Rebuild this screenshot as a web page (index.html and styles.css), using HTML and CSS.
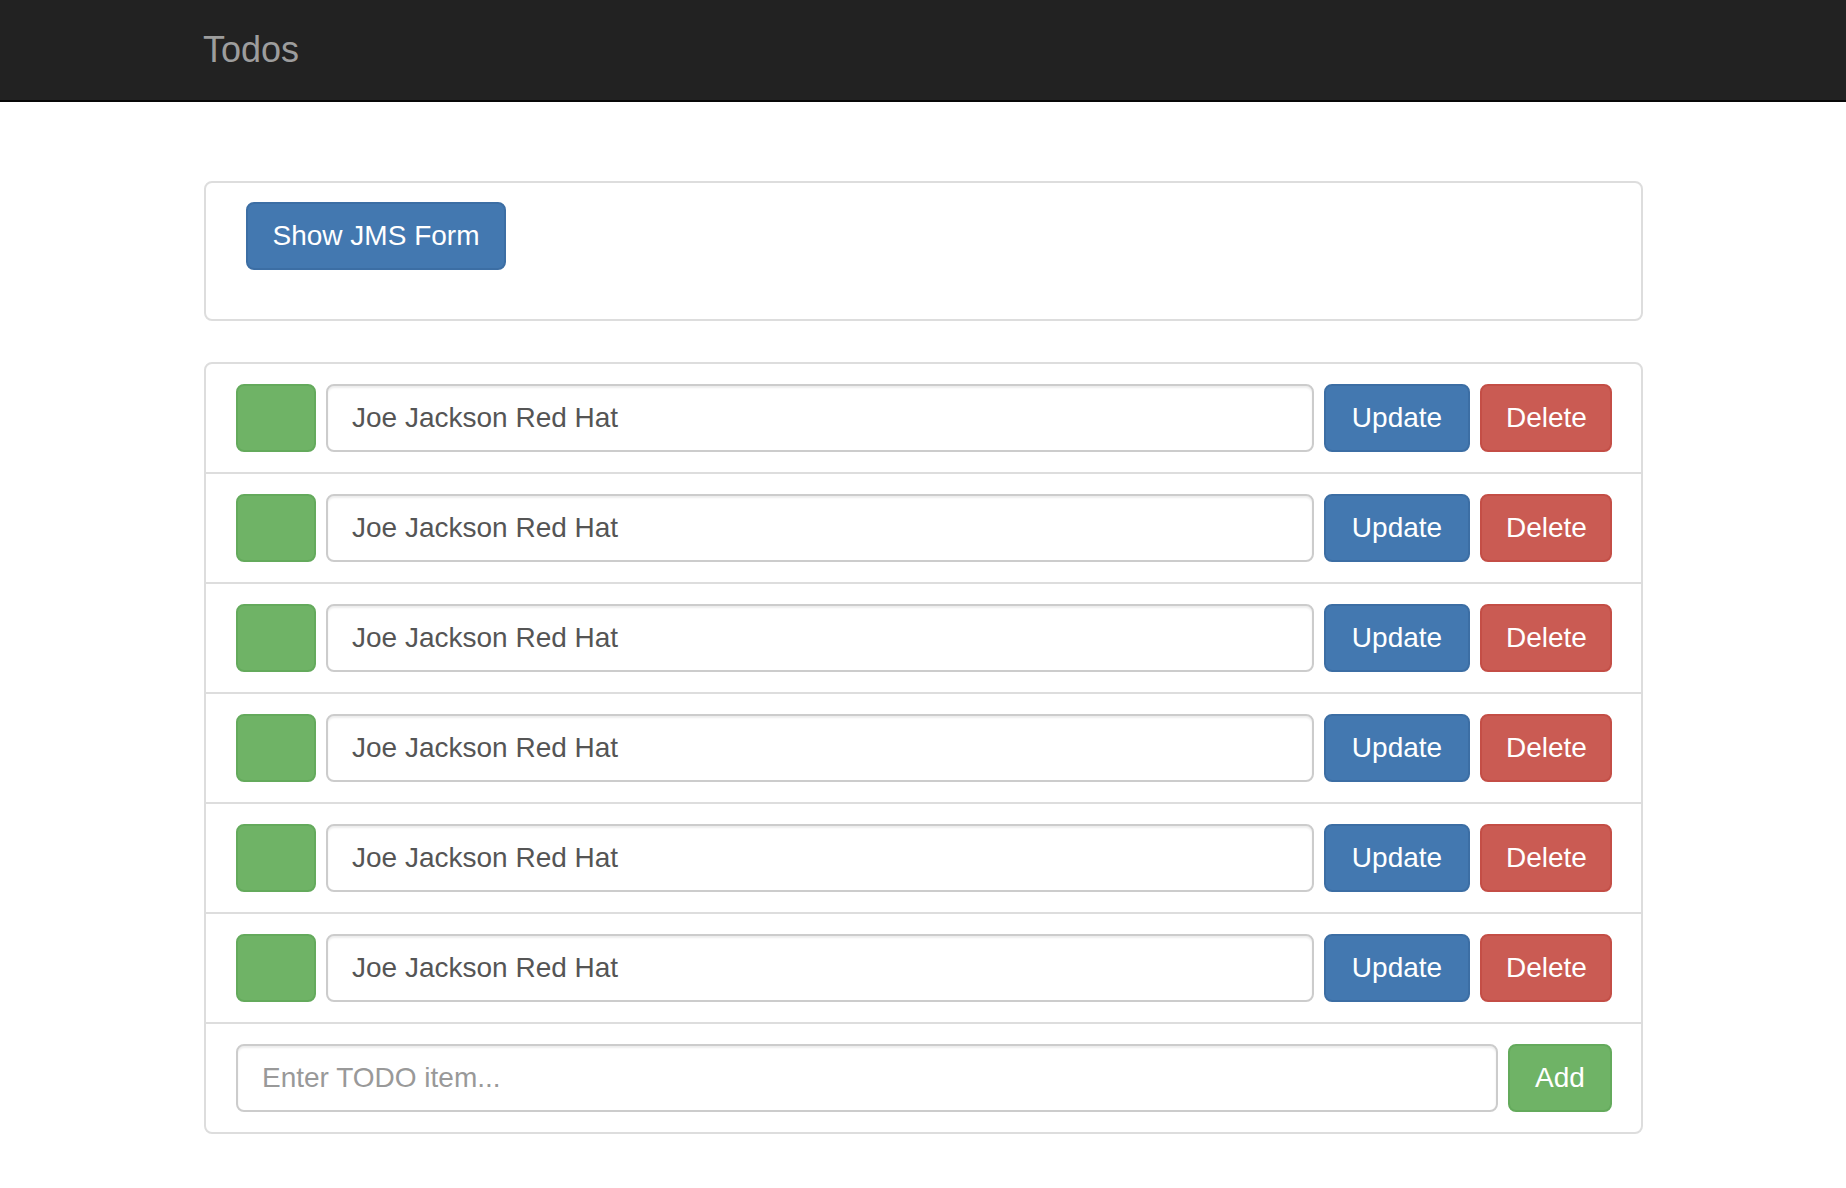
FILE: index.html
```html
<!DOCTYPE html>
<html lang="en">
<head>
<meta charset="utf-8">
<title>Todos</title>
<link rel="stylesheet" href="styles.css">
</head>
<body>
<nav class="navbar">
  <div class="navbar-inner">
    <a class="brand" href="#">Todos</a>
  </div>
</nav>
<main class="page">
  <section class="card card-jms">
    <button class="btn btn-primary btn-jms">Show JMS Form</button>
  </section>
  <section class="card todo-list">
    <div class="todo-row">
      <button class="btn btn-success btn-check" aria-label="done"></button>
      <input class="form-control" type="text" value="Joe Jackson Red Hat">
      <button class="btn btn-primary btn-update">Update</button>
      <button class="btn btn-danger btn-delete">Delete</button>
    </div>
    <div class="todo-row">
      <button class="btn btn-success btn-check" aria-label="done"></button>
      <input class="form-control" type="text" value="Joe Jackson Red Hat">
      <button class="btn btn-primary btn-update">Update</button>
      <button class="btn btn-danger btn-delete">Delete</button>
    </div>
    <div class="todo-row">
      <button class="btn btn-success btn-check" aria-label="done"></button>
      <input class="form-control" type="text" value="Joe Jackson Red Hat">
      <button class="btn btn-primary btn-update">Update</button>
      <button class="btn btn-danger btn-delete">Delete</button>
    </div>
    <div class="todo-row">
      <button class="btn btn-success btn-check" aria-label="done"></button>
      <input class="form-control" type="text" value="Joe Jackson Red Hat">
      <button class="btn btn-primary btn-update">Update</button>
      <button class="btn btn-danger btn-delete">Delete</button>
    </div>
    <div class="todo-row">
      <button class="btn btn-success btn-check" aria-label="done"></button>
      <input class="form-control" type="text" value="Joe Jackson Red Hat">
      <button class="btn btn-primary btn-update">Update</button>
      <button class="btn btn-danger btn-delete">Delete</button>
    </div>
    <div class="todo-row">
      <button class="btn btn-success btn-check" aria-label="done"></button>
      <input class="form-control" type="text" value="Joe Jackson Red Hat">
      <button class="btn btn-primary btn-update">Update</button>
      <button class="btn btn-danger btn-delete">Delete</button>
    </div>
    <div class="todo-row">
      <input class="form-control" type="text" placeholder="Enter TODO item...">
      <button class="btn btn-success btn-add">Add</button>
    </div>
  </section>
</main>
</body>
</html>
```
FILE: styles.css
```css
* {
  box-sizing: border-box;
}

html, body {
  margin: 0;
  padding: 0;
  background: #ffffff;
}

body {
  font-family: "Liberation Sans", Arial, Helvetica, sans-serif;
  font-size: 28px;
  line-height: 40px;
  color: #333333;
}

.navbar {
  background: #222222;
  height: 102px;
  border-bottom: 2px solid #080808;
}

.navbar-inner {
  width: 1500px;
  margin: 0 auto;
}

.brand {
  display: inline-block;
  padding: 30px 30px;
  font-size: 36px;
  line-height: 40px;
  color: #9d9d9d;
  text-decoration: none;
}

.page {
  width: 1500px;
  margin: 79px auto 0;
  padding: 0 30px 0 31px;
}

.card {
  border: 2px solid #dddddd;
  border-radius: 8px;
  background: #ffffff;
}

.card-jms {
  padding: 19px 39px 49px 40px;
}

.todo-list {
  margin-top: 41px;
}

.todo-row {
  display: flex;
  align-items: center;
  gap: 10px;
  padding: 20px 29px 20px 30px;
}

.todo-row + .todo-row {
  border-top: 2px solid #dddddd;
}

.btn {
  display: inline-block;
  height: 68px;
  padding: 0 24px;
  font-family: inherit;
  font-size: 28px;
  line-height: 40px;
  font-weight: 400;
  text-align: center;
  white-space: nowrap;
  border: 2px solid transparent;
  border-radius: 8px;
  color: #ffffff;
  cursor: pointer;
  flex: none;
}

.btn-primary {
  background: #4378b0;
  border-color: #3c6ea4;
}

.btn-danger {
  background: #ca5b53;
  border-color: #c44e46;
}

.btn-success {
  background: #6fb366;
  border-color: #64aa5c;
}

.btn-jms {
  width: 260px;
}

.btn-check {
  width: 80px;
}

.btn-update {
  width: 146px;
}

.btn-delete {
  width: 132px;
}

.btn-add {
  width: 104px;
}

.form-control {
  flex: 1 1 auto;
  min-width: 0;
  height: 68px;
  padding: 0 24px;
  font-family: inherit;
  font-size: 28px;
  line-height: 40px;
  color: #555555;
  background: #ffffff;
  border: 2px solid #cccccc;
  border-radius: 8px;
  box-shadow: inset 0 2px 2px rgba(0, 0, 0, 0.075);
  outline: none;
}

.form-control::placeholder {
  color: #999999;
  opacity: 1;
}
```
